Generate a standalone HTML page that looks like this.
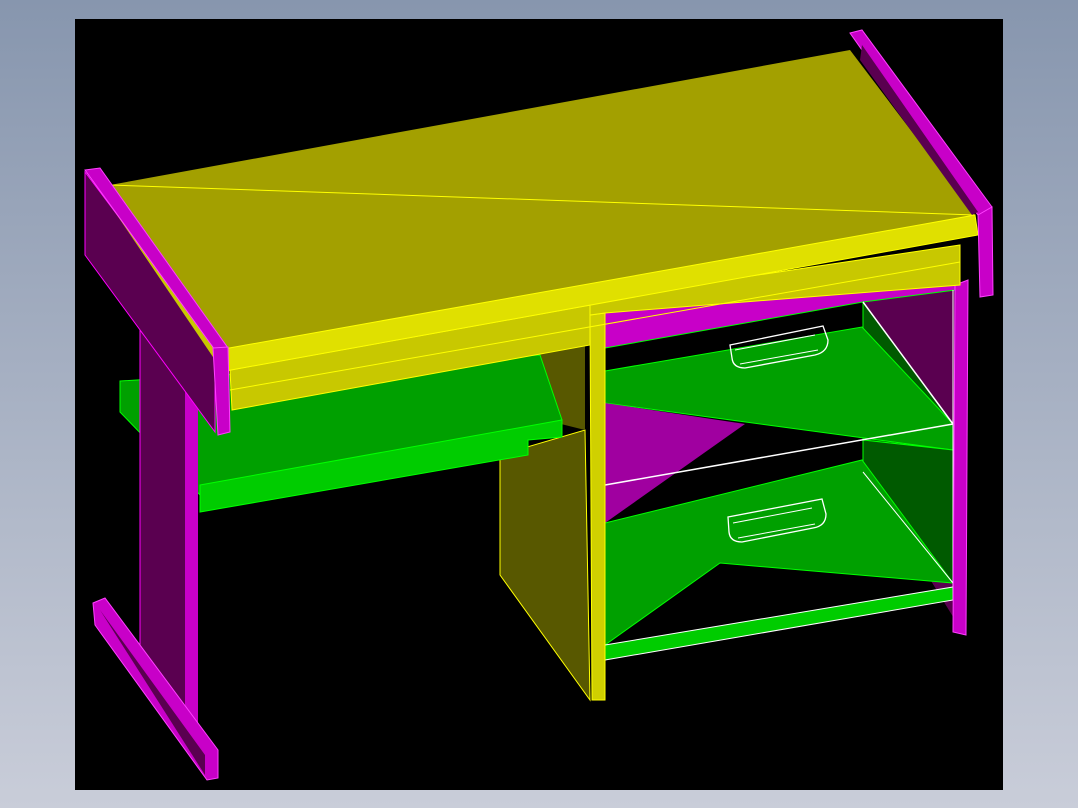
<!DOCTYPE html>
<html><head><meta charset="utf-8"><style>
html,body{margin:0;padding:0;width:1078px;height:808px;overflow:hidden;background:linear-gradient(#8796ae,#c9cdd9);}
svg{position:absolute;left:0;top:0}
</style></head><body>
<svg width="1078" height="808" viewBox="0 0 1078 808">
<rect x="75" y="19" width="928" height="771" fill="#000"/>
<!-- right pedestal -->
<polygon points="863,302 955,290 955,620 863,470" fill="#5a0050"/>
<polygon points="605,305 955,280 955,290 863,302 605,348" fill="#c800c8" stroke="#00ff00" stroke-width="1"/>
<polygon points="863,302 953,424 953,450 863,440" fill="#005a00" stroke="#00ff00" stroke-width="1"/>
<polygon points="605,371 862,327 953,424 953,450 605,403" fill="#00a000" stroke="#00ff00" stroke-width="1"/>
<polygon points="605,403 745,424 605,523" fill="#a000a0"/>
<polygon points="863,440 953,450 953,583 863,470" fill="#005a00" stroke="#00ff00" stroke-width="1"/>
<polygon points="605,523 862,460 953,583 720,563 605,645" fill="#00a000" stroke="#00ff00" stroke-width="1"/>
<polygon points="605,645 953,587 953,600 605,660" fill="#00cc00" stroke="#fff" stroke-width="1"/>
<line x1="605" y1="485" x2="953" y2="424" stroke="#fff" stroke-width="1.5"/>
<line x1="605" y1="350" x2="605" y2="660" stroke="#fff" stroke-width="1"/>
<line x1="953" y1="290" x2="953" y2="600" stroke="#fff" stroke-width="1"/>
<line x1="863" y1="302" x2="953" y2="424" stroke="#fff" stroke-width="1.5"/>
<line x1="863" y1="472" x2="953" y2="583" stroke="#fff" stroke-width="1"/>
<polygon points="955,285 968,280 966,635 953,632" fill="#c800c8" stroke="#ff40ff" stroke-width="1"/>
<!-- handles -->
<path d="M730,345 L823,326 L828,340 Q828,352 815,355 L745,368 Q733,368 732,358 Z" fill="none" stroke="#fff" stroke-width="1.3"/>
<path d="M735,350 L815,335 M740,364 L818,350" stroke="#fff" stroke-width="1"/>
<path d="M728,517 L822,499 L826,514 Q826,526 813,528 L742,542 Q730,542 729,532 Z" fill="none" stroke="#fff" stroke-width="1.3"/>
<path d="M733,523 L812,508 M738,538 L815,524" stroke="#fff" stroke-width="1"/>
<!-- middle pedestal yellow -->
<polygon points="500,455 585,430 590,700 500,575" fill="#585800" stroke="#ffff00" stroke-width="1"/>
<polygon points="520,355 585,340 585,430 545,420" fill="#585800"/>
<polygon points="590,315 605,313 605,700 592,700" fill="#d0d000" stroke="#ffff00" stroke-width="1"/>
<!-- shelf -->
<polygon points="120,381 540,355 562,420 200,495 120,412" fill="#00a000" stroke="#00ff00" stroke-width="1"/>
<polygon points="200,485 562,420 562,437 528,440 528,455 200,512" fill="#00cc00" stroke="#00ff00" stroke-width="1"/>
<!-- left leg -->
<polygon points="140,330 190,395 190,735 140,650" fill="#5a0050" stroke="#ff00ff" stroke-width="1"/>
<polygon points="185,390 198,395 198,740 185,735" fill="#c800c8"/>
<polygon points="93,603 105,598 218,750 218,778 207,780 95,625" fill="#c800c8" stroke="#ff40ff" stroke-width="1"/>
<polygon points="100,610 205,755 205,775" fill="#5a0050"/>
<!-- left end panel -->
<polygon points="85,172 215,345 215,432 85,255" fill="#5a0050" stroke="#ff00ff" stroke-width="1"/>
<polygon points="100,190 112,190 215,335 215,360" fill="#c8c800"/>
<!-- tabletop -->
<polygon points="110,185 850,50 975,215 218,350" fill="#a3a000"/>
<line x1="110" y1="185" x2="975" y2="215" stroke="#ffff00" stroke-width="1"/>
<polygon points="590,300 960,245 960,285 605,313 590,315" fill="#c8c800" stroke="#ffff00" stroke-width="1"/>
<polygon points="230,370 590,305 590,345 232,410" fill="#c8c800" stroke="#ffff00" stroke-width="1"/>
<polygon points="218,350 975,215 978,235 220,372" fill="#e0e000" stroke="#ffff00" stroke-width="1"/>
<line x1="230" y1="390" x2="960" y2="262" stroke="#ffff00" stroke-width="1"/>
<!-- left rail -->
<polygon points="85,170 100,168 228,348 215,350" fill="#c800c8" stroke="#ff40ff" stroke-width="1"/>
<polygon points="213,348 228,347 230,432 218,435" fill="#c800c8" stroke="#ff40ff" stroke-width="1"/>
<!-- right rail -->
<polygon points="850,33 862,30 992,207 980,218" fill="#c800c8" stroke="#ff40ff" stroke-width="1"/>
<polygon points="862,45 978,212 972,215 860,60" fill="#5a0050"/>
<polygon points="978,215 992,207 993,295 980,297" fill="#c800c8" stroke="#ff40ff" stroke-width="1"/>
</svg>
</body></html>
